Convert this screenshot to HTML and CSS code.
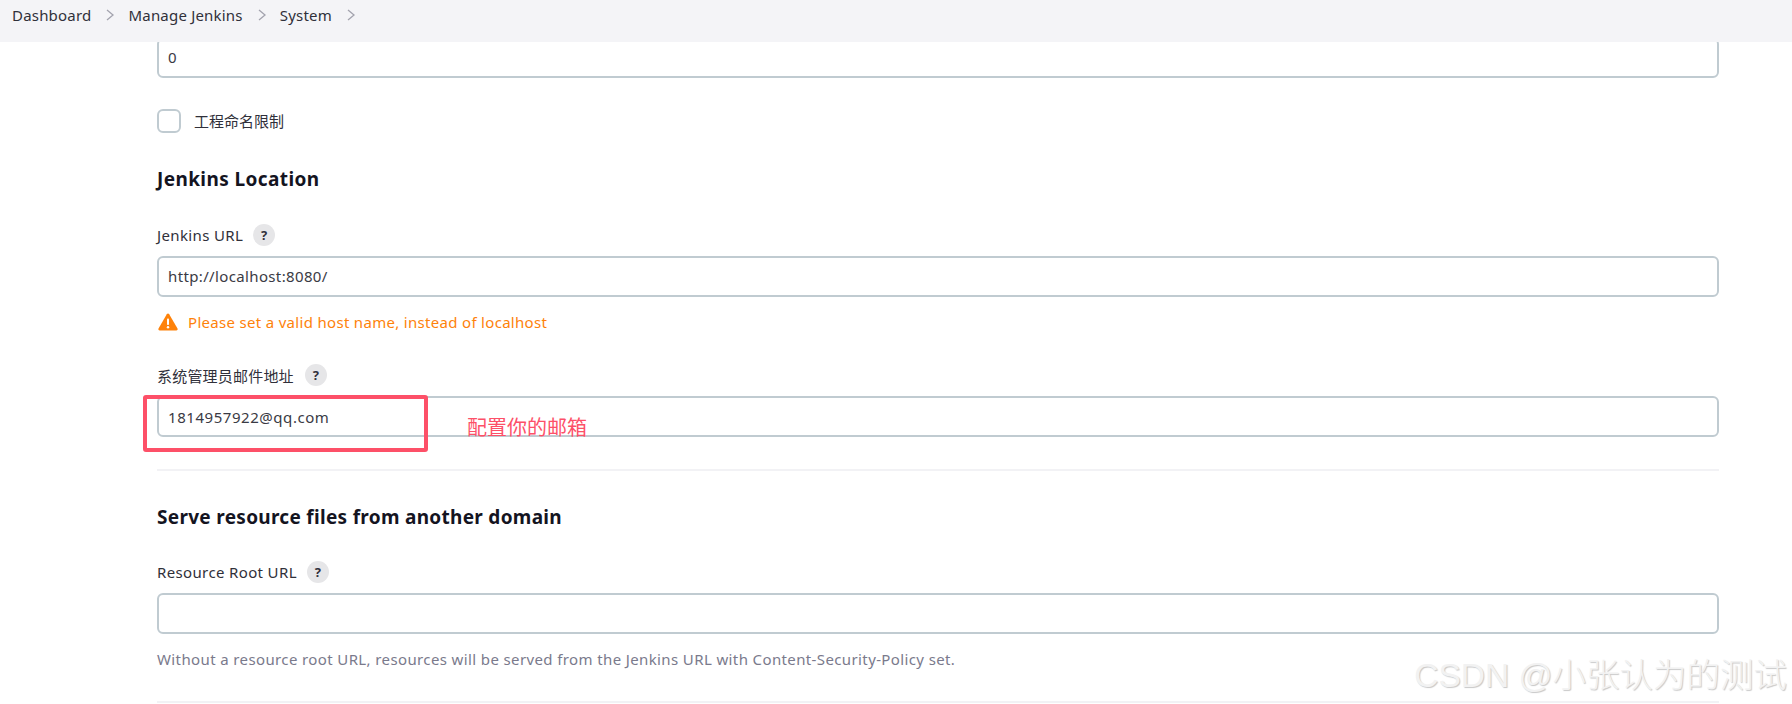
FILE: index.html
```html
<!DOCTYPE html>
<html lang="zh">
<head>
<meta charset="utf-8">
<title>System - Jenkins</title>
<link rel="stylesheet" href="styles.css">
</head>
<body>
<nav class="crumbs">
  <span class="crumb">Dashboard</span>
  <svg class="chev" viewBox="0 0 10 14"><path d="M2 2l6 5-6 5"/></svg>
  <span class="crumb">Manage Jenkins</span>
  <svg class="chev" viewBox="0 0 10 14"><path d="M2 2l6 5-6 5"/></svg>
  <span class="crumb">System</span>
  <svg class="chev" viewBox="0 0 10 14"><path d="M2 2l6 5-6 5"/></svg>
</nav>
<main class="form">
  <div class="input first">0</div>
  <label class="check"><span class="box"></span><span class="check-text">工程命名限制</span></label>
  <h2 class="title loc">Jenkins Location</h2>
  <div class="label"><span>Jenkins URL</span><span class="help">?</span></div>
  <div class="input">http://localhost:8080/</div>
  <div class="warn">
    <svg class="warn-ico" viewBox="0 0 20 18"><path d="M10 .6c.5 0 .9.3 1.2.7l8.3 14.3c.5.9-.1 2-1.200 2H1.700c-1.100 0-1.700-1.100-1.200-2L8.800 1.300C9.100.9 9.500.6 10 .6z" fill="#fe820a"/><rect x="9" y="5.500" width="2" height="6.500" rx=".8" fill="#fff"/><circle cx="10" cy="14.300" r="1.200" fill="#fff"/></svg>
    <span>Please set a valid host name, instead of localhost</span>
  </div>
  <div class="label admin"><span>系统管理员邮件地址</span><span class="help">?</span></div>
  <div class="input email">1814957922@qq.com
    <span class="mark"></span>
    <span class="note">配置你的邮箱</span>
  </div>
  <hr class="rule one">
  <h2 class="title serve">Serve resource files from another domain</h2>
  <div class="label res"><span>Resource Root URL</span><span class="help">?</span></div>
  <div class="input"></div>
  <p class="hint">Without a resource root URL, resources will be served from the Jenkins URL with Content-Security-Policy set.</p>
  <hr class="rule two">
</main>
<div class="mark-w">CSDN @小张认为的测试</div>
</body>
</html>
```
FILE: styles.css
```css
* { box-sizing: border-box; }
html, body { margin: 0; height: 704px; overflow: hidden; background: #fff; }
body { font-family: "Noto Sans", "Noto Sans CJK SC", sans-serif; font-size: 15px; letter-spacing: .36px; color: #14141f; position: relative; }
.crumbs { position: absolute; top: 0; left: 0; right: 0; height: 42px; background: #f4f4f7; display: flex; align-items: center; padding: 0 0 12px 12px; z-index: 2; color: #30303a; letter-spacing: .2px; }
.crumb { line-height: 20px; }
.chev { width: 10px; height: 14px; margin: 0 13px 0 14px; fill: none; stroke: #a3a3ae; stroke-width: 1.300; flex: none; }
.form { padding: 38px 73px 0 157px; }
.input { height: 41px; border: 2px solid #c0cbd1; border-radius: 6px; padding: 0 9px 1px; display: flex; align-items: center; background: #fff; color: #3a3a44; position: relative; }
.first { height: 40px; padding-bottom: 2px; }
.check { display: flex; align-items: center; gap: 13px; margin-top: 31px; height: 24px; color: #30303a; letter-spacing: 0; }
.check-text { padding-bottom: 2px; }
.box { width: 24px; height: 24px; border: 2px solid #c0cbd1; border-radius: 6px; flex: none; }
.title { margin: 0; font-size: 19px; line-height: 24px; font-weight: 700; letter-spacing: .3px; color: #14141f; }
.loc { margin-top: 34px; letter-spacing: .4px; }
.label { display: flex; align-items: center; height: 22px; gap: 10px; color: #30303a; }
.loc + .label { margin-top: 33px; margin-bottom: 10px; }
.help { width: 22px; height: 22px; border-radius: 50%; background: #e6e6e8; display: flex; align-items: center; justify-content: center; font-size: 13px; font-weight: 700; color: #30303a; letter-spacing: 0; }
.warn { display: flex; align-items: center; gap: 10px; margin-top: 14px; height: 22px; color: #fe820a; letter-spacing: .31px; }
.warn-ico { width: 20px; height: 18px; margin-left: 1px; }
.admin { margin-top: 31px; margin-bottom: 10px; letter-spacing: .2px; gap: 11px; }
.email { letter-spacing: .55px; padding-bottom: 0; }
.mark { position: absolute; left: -16px; top: -3px; width: 285px; height: 57px; border: 4px solid #fd5068; border-radius: 3px; }
.note { position: absolute; left: 308px; top: 17px; font-size: 20px; line-height: 26px; letter-spacing: 0; color: #fd5068; }
.rule { margin: 0; border: 0; height: 2px; background: #f2f2f5; }
.one { margin-top: 32px; }
.serve { margin-top: 34px; }
.res { margin-top: 32px; margin-bottom: 10px; }
.hint { margin: 14px 0 0; line-height: 22px; color: #7a7a8c; letter-spacing: .38px; }
.two { margin-top: 31px; }
.mark-w { position: absolute; right: 5px; bottom: 8px; font-family: "Liberation Sans", "Noto Sans CJK SC", sans-serif; font-size: 33.500px; font-weight: 300; line-height: 40px; letter-spacing: 0; color: #f2f2f2; text-shadow: 1px 1px 1px #c8c8c8; z-index: 3; }
```
